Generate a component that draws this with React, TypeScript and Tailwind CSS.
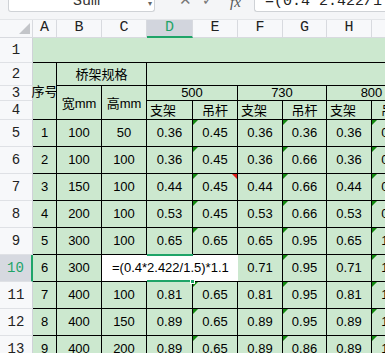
import React from 'react';

const COLS = '33px 24px 45px 45px 46px 45px 45px 44px 45px 45px';
const ROWS = '18px 25px 23px 15px 19px repeat(9, 27px)';

const letters = ['A', 'B', 'C', 'D', 'E', 'F', 'G', 'H', 'I'];

// C10 and E10 sit under the open cell editor, so they are left blank here
const data: string[][] = [
    ['1', '100', '50', '0.36', '0.45', '0.36', '0.36', '0.36', '0.45'],
    ['2', '100', '100', '0.36', '0.45', '0.36', '0.66', '0.36', '0.45'],
    ['3', '150', '100', '0.44', '0.45', '0.44', '0.66', '0.44', '0.45'],
    ['4', '200', '100', '0.53', '0.45', '0.53', '0.66', '0.53', '0.45'],
    ['5', '300', '100', '0.65', '0.65', '0.65', '0.95', '0.65', '1.05'],
    ['6', '300', '', '', '', '0.71', '0.95', '0.71', '1.05'],
    ['7', '400', '100', '0.81', '0.65', '0.81', '0.95', '0.81', '1.05'],
    ['8', '400', '150', '0.89', '0.65', '0.89', '0.95', '0.89', '1.05'],
    ['9', '400', '200', '0.89', '0.65', '0.89', '0.86', '0.89', '1.05'],
];

const sans = "font-['Liberation_Sans','Noto_Sans_CJK_SC',sans-serif]";
const cjk = "font-['Noto_Sans_CJK_SC','Liberation_Sans',sans-serif]";
const serif = "font-['Liberation_Mono','Noto_Sans_CJK_SC',monospace]";

const GreenMark = () => (
    <span className="absolute left-0 top-0 h-0 w-0 border-r-[5px] border-t-[5px] border-r-transparent border-t-[#11880f]" />
);

const RowHead = ({ n, active }: { n: number; active?: boolean }) => (
    <div
        className={`flex items-center justify-center border-b border-[#dfe1e5] text-[14px] ${serif} ${
            active ? 'border-r-2 border-r-[#1fa468] bg-[#d6d9e0] text-[#1fa468]' : 'border-r border-r-[#cfd2d8] bg-[#f7f8fa] text-[#222]'
        }`}
    >
        {n}
    </div>
);

const Cell = ({ children, className = '' }: { children?: React.ReactNode; className?: string }) => (
    <div className={`relative flex items-center justify-center overflow-visible whitespace-nowrap border-b border-r border-black text-[13px] text-black ${sans} ${className}`}>
        {children}
    </div>
);

export default function App() {
    return (
        <div className="h-[353px] w-[385px] overflow-hidden bg-[#f4f5f7]">
            {/* formula bar, cut at the top */}
            <div className="flex h-[20px] items-start border-b border-[#e3e5e8]">
                <div className="relative ml-[8px] h-[12px] w-[147px] overflow-hidden rounded-b-[3px] border border-t-0 border-[#cfd2d6] bg-white">
                    <span className={`absolute left-[64px] top-[-6px] whitespace-nowrap text-[15px] leading-none text-[#333] ${serif}`}>Sum</span>
                    <span className="absolute right-[2px] top-[-3px] text-[8px] text-[#666]">▾</span>
                </div>
                <div className="relative h-[12px] w-[99px] overflow-hidden">
                    <span className="absolute left-[24px] top-[-8px] text-[15px] leading-none text-[#777]">✕</span>
                    <span className="absolute left-[47px] top-[-7px] text-[14px] leading-none text-[#777]">✓</span>
                    <span className="absolute left-[75px] top-[-5px] whitespace-nowrap font-['Liberation_Serif',serif] text-[15px] italic leading-none text-[#555]">fx</span>
                </div>
                <div className="relative h-[12px] flex-1 overflow-hidden rounded-bl-[3px] border border-r-0 border-t-0 border-[#cfd2d6] bg-white">
                    <span className={`absolute left-[10px] top-[-6px] whitespace-nowrap text-[15px] leading-none text-[#222] ${serif}`}>=(0.4*2.422/1.5</span>
                </div>
            </div>

            <div className="grid" style={{ gridTemplateColumns: COLS, gridTemplateRows: ROWS }}>
                {/* column headers */}
                <div className="relative border-b border-r border-[#d8dadf] bg-[#f7f8fa]">
                    <span className="absolute bottom-[3px] right-[2px] h-0 w-0 border-b-[11px] border-l-[11px] border-b-[#c3c5c9] border-l-transparent" />
                </div>
                {letters.map((l) => (
                    <div
                        key={l}
                        className={`flex items-center justify-center border-r border-[#d8dadf] text-[15px] ${serif} ${
                            l === 'D' ? 'border-b-2 border-b-[#1fa468] bg-[#d2d5dd] text-[#1fa468]' : 'border-b border-b-[#d8dadf] bg-[#f7f8fa] text-[#222]'
                        }`}
                    >
                        {l}
                    </div>
                ))}

                {/* row 1 */}
                <RowHead n={1} />
                <div className="col-span-9 border-b border-black bg-[#cce8cf]" />

                {/* rows 2-4 */}
                <RowHead n={2} />
                <Cell className={`row-span-3 bg-[#cce8cf] text-[12px] ${cjk}`}>序号</Cell>
                <Cell className={`col-span-2 bg-[#cce8cf] ${cjk}`}>桥架规格</Cell>
                <Cell className="col-span-6 bg-[#cce8cf]" />

                <RowHead n={3} />
                <Cell className="row-span-2 bg-[#cce8cf] pt-[2px]">
                    <span>
                        <span className={cjk}>宽</span>mm
                    </span>
                </Cell>
                <Cell className="row-span-2 bg-[#cce8cf] pt-[2px]">
                    <span>
                        <span className={cjk}>高</span>mm
                    </span>
                </Cell>
                <Cell className="col-span-2 bg-[#cce8cf]">500</Cell>
                <Cell className="col-span-2 bg-[#cce8cf]">730</Cell>
                <Cell className="col-span-2 bg-[#cce8cf]">800</Cell>

                <RowHead n={4} />
                {['支架', '吊杆', '支架', '吊杆', '支架', '吊杆'].map((t, i) => (
                    <Cell key={i} className={`bg-[#cce8cf] ${cjk} ${i % 2 === 0 ? 'justify-start pl-[3px]' : ''}`}>
                        {t}
                    </Cell>
                ))}

                {/* data rows */}
                {data.map((row, r) => (
                    <React.Fragment key={r}>
                        <RowHead n={r + 5} active={r === 5} />
                        {row.map((v, c) => {
                            const editing = r === 5 && c === 3;
                            return (
                                <Cell key={c} className="bg-[#cce8cf]">
                                    {(c === 4 || c === 6 || c === 8) && !(r === 5 && c === 4) && <GreenMark />}
                                    {r === 2 && c === 4 && (
                                        <span className="absolute right-0 top-0 h-0 w-0 border-l-[5px] border-t-[5px] border-l-transparent border-t-[#e0201b]" />
                                    )}
                                    {editing ? (
                                        <>
                                            <div className="absolute left-[-45px] top-0 z-10 flex h-[26px] w-[136px] items-center bg-white pl-[10px] text-[13px]">
                                                =(0.4*2.422/1.5)*1.1
                                            </div>
                                            <span className="absolute left-0 right-[-1px] top-[-1px] z-20 h-[2px] bg-[#1fa468]" />
                                            <span className="absolute bottom-[-1px] left-0 right-[-1px] z-20 h-[2px] bg-[#1fa468]" />
                                            <span className="absolute bottom-[-3px] right-[-3px] z-30 h-[5px] w-[5px] border border-white bg-[#1fa468]" />
                                        </>
                                    ) : (
                                        v
                                    )}
                                </Cell>
                            );
                        })}
                    </React.Fragment>
                ))}
            </div>
        </div>
    );
}
